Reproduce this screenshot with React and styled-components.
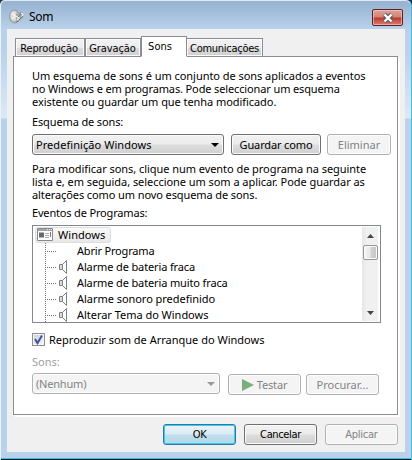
import React from "react";
import styled, { createGlobalStyle } from "styled-components";

const Global = createGlobalStyle`
  * { box-sizing: border-box; }
  body { margin: 0; background: #1c3550; }
`;

const Window = styled.div`
  width: 412px;
  height: 460px;
  display: flex;
  flex-direction: column;
  padding: 1px 6px 6px 6px;
  border: solid #eaf3fb;
  border-width: 0 1px 0 1px;
  border-right-color: #35c4e8;
  border-radius: 5px 6px 0 0;
  background: linear-gradient(#98b4d2 0, #98b4d2 3px, #b9d1ea 29px, #b9d1ea 50px, #dce9f7 118px, #b9d1ea 119px, #b9d1ea 100%);
  box-shadow: inset 0 1px #dfeaf5, inset 0 -1px #071018, inset 0 -2px #20cdf0;
  font: 11px/13px "Noto Sans", "Open Sans", sans-serif;
  color: #000;
  white-space: nowrap;
`;

const TitleBar = styled.header`
  height: 28px;
  flex: none;
  display: flex;
  align-items: flex-start;
  padding-left: 2px;
`;

const Title = styled.h1`
  margin: 9px 0 0 4px;
  flex: 1;
  font: 12px/14px "Noto Sans", sans-serif;
  letter-spacing: -0.3px;
`;

const Close = styled.button`
  width: 31px;
  height: 17px;
  margin: 8px 2px 0 0;
  padding: 0;
  display: flex;
  align-items: center;
  justify-content: center;
  border: 1px solid #5a2028;
  border-radius: 2px;
  background: linear-gradient(#e0a196 0, #d08478 7px, #b83a2b 8px, #c7584a 11px, #d98070 100%);
  box-shadow: inset 0 0 0 1px rgba(255, 214, 205, 0.55);
`;

const Client = styled.main`
  width: 398px;
  height: 423px;
  padding: 7px 7px 0 6px;
  background: #f0f0f0;
`;

const Tabs = styled.nav`
  height: 21px;
  display: flex;
  align-items: flex-end;
  padding-left: 2px;
`;

const Tab = styled.div`
  width: ${(p) => p.$w}px;
  height: ${(p) => (p.$active ? 21 : 19)}px;
  padding: 3px ${(p) => p.$right || 0}px 0 0;
  border: 1px solid #8c8c96;
  border-bottom-color: ${(p) => (p.$active ? "#fff" : "#8c8c96")};
  border-left-width: ${(p) => (p.$joined ? 0 : 1)}px;
  background: ${(p) => (p.$active ? "#fff" : "linear-gradient(#f3f3f3 0, #ebebeb 50%, #dcdcdc 51%, #d0d0d0 100%)")};
  box-shadow: ${(p) => (p.$active ? "none" : "inset 0 0 0 1px #fafafa")};
  font: 11px/14px "DejaVu Sans Condensed", "DejaVu Sans", sans-serif;
  font-stretch: condensed;
  text-align: center;
  letter-spacing: ${(p) => p.$ls || 0}px;
  position: relative;
  z-index: 1;
`;

const Panel = styled.section`
  width: 385px;
  height: 359px;
  margin-top: -1px;
  padding: 12px 0 0 18px;
  display: flex;
  flex-direction: column;
  border: 1px solid #8c8c96;
  background: #fff;
  box-shadow: 2px 2px #fff;
`;

const Line = styled.span`
  display: block;
  height: 13px;
  letter-spacing: ${(p) => p.$ls || 0}px;
  color: ${(p) => p.$color || "inherit"};
`;

const Paragraph = styled.div`
  height: 39px;
  flex: none;
  margin-bottom: ${(p) => p.$gap}px;
`;

const Label = styled(Line)`
  flex: none;
  margin-bottom: ${(p) => p.$gap}px;
`;

const Controls = styled.div`
  display: flex;
  flex: none;
  height: 22px;
  margin-bottom: 6px;
`;

const control = (p) =>
  p.$disabled
    ? "border: 1px solid #adb2b5; background: #f4f4f4; color: #838383; box-shadow: inset 0 0 0 1px #fcfcfc;"
    : p.$primary
    ? "border: 1px solid #2c7a9e; background: linear-gradient(#eaf3f8 0, #dcebf4 48%, #c2deec 52%, #b5d7e8 100%); box-shadow: inset 0 0 0 1px #35cdf5;"
    : "border: 1px solid #707070; background: linear-gradient(#f2f2f2 0, #ebebeb 48%, #dddddd 52%, #cfcfcf 100%); box-shadow: inset 0 0 0 1px #fbfbfb;";

const Button = styled.button`
  width: ${(p) => p.$w}px;
  height: 21px;
  flex: none;
  margin: ${(p) => p.$top || 0}px 0 0 ${(p) => p.$left || 0}px;
  padding: 0;
  display: flex;
  align-items: center;
  justify-content: center;
  gap: 3px;
  border-radius: 3px;
  color: #000;
  font: ${(p) => (p.$ui ? '11px/14px "DejaVu Sans Condensed"' : '11px/14px "Noto Sans"')}, sans-serif;
  font-stretch: ${(p) => (p.$ui ? "condensed" : "normal")};
  letter-spacing: ${(p) => p.$ls || 0}px;
  ${control}
`;

const Select = styled.div`
  width: ${(p) => p.$w}px;
  height: 21px;
  flex: none;
  display: flex;
  align-items: center;
  justify-content: space-between;
  padding: 0 4px 0 3px;
  border-radius: 3px;
  letter-spacing: ${(p) => p.$ls || 0}px;
  ${control}
`;

const List = styled.div`
  width: 349px;
  height: 98px;
  flex: none;
  display: flex;
  justify-content: space-between;
  padding: 1px 2px 1px 1px;
  margin-bottom: 10px;
  border: 1px solid #828790;
`;

const Tree = styled.ul`
  margin: 0;
  padding: 0 0 0 1px;
  list-style: none;
`;

const Root = styled.li`
  width: 76px;
  height: 16px;
  display: flex;
  align-items: center;
  gap: 5px;
  padding: 0 0 1px 1px;
  border: 1px solid #dedede;
  border-radius: 3px;
  background: linear-gradient(#fafafa, #e8e8e8);
  letter-spacing: ${(p) => p.$ls || 0}px;
`;

const Item = styled.li`
  height: 16px;
  display: flex;
  align-items: flex-start;
  line-height: 15px;
  letter-spacing: ${(p) => p.$ls || 0}px;
`;

const Scroll = styled.div`
  width: 16px;
  height: 94px;
  display: flex;
  flex-direction: column;
  align-items: center;
  background: linear-gradient(90deg, #e6e6e6, #f0f0f0 30%, #f0f0f0);
  padding: 7px 0 6px;
`;

const Thumb = styled.div`
  width: 15px;
  height: 15px;
  margin: 7px 0 auto;
  border: 1px solid #979797;
  border-radius: 2px;
  background: linear-gradient(90deg, #f5f5f5 0, #e9e9eb 45%, #d0d0d4 55%, #c5c5ca 100%);
  box-shadow: inset 0 0 0 1px #fafafa;
`;

const CheckRow = styled.label`
  height: 13px;
  flex: none;
  display: flex;
  align-items: center;
  gap: 4px;
  margin-bottom: 9px;
`;

const Check = styled.span`
  width: 13px;
  height: 13px;
  display: flex;
  border: 1px solid #8e8f8f;
  background: linear-gradient(135deg, #cbd0d8, #f6f6f6);
  box-shadow: inset 0 0 0 1px #f4f4f4;
`;

const Footer = styled.footer`
  display: flex;
  padding: 9px 0 0 150px;
`;

const SpeakerLogo = () => (
  <svg width="16" height="24" viewBox="0 -8 16 24">
    <ellipse cx="5.5" cy="7.5" rx="5" ry="6.5" fill="#b4b6b6" stroke="#8f9496" strokeWidth=".8" />
    <ellipse cx="5" cy="7" rx="3.6" ry="5" fill="#dcdddc" />
    <path d="M7 4 11 6 13 3 15 4 14 9 9 13 7 11Z" fill="#a3a7a8" />
    <path d="m3 4 3 3-3 3M7 7l3 2-2 2M12 4l2 1-1 3" fill="none" stroke="#f5f5f2" strokeWidth="1.2" />
    <path d="m9 8 3-3M10 11l4-4M7 13l3-1M11 5l1-2" stroke="#6e777c" strokeWidth=".9" />
  </svg>
);

const Arrow = ({ color = "#000", up, w = 8 }) => (
  <svg width={w} height="4" viewBox="0 0 8 4" preserveAspectRatio="none">
    <path d={up ? "M0 4h8L4 0Z" : "M0 0h8L4 4Z"} fill={color} />
  </svg>
);

const Branch = ({ icon }) => (
  <svg width="42" height="16" viewBox="0 0 42 16">
    <path d="M10.5 0v16M12 8.5h10" stroke="#777" strokeDasharray="1 1" />
    {icon && (
      <g fill="#fff" stroke="#808080">
        <path d="M27.5 5.5 31.5 1.5v13L27.5 10.5Z" />
        <path d="M24.5 5.5h3v5h-3Z" fill="#ddd" />
      </g>
    )}
  </svg>
);

const ProgramIcon = () => (
  <svg width="16" height="13" viewBox="0 0 16 13">
    <path d="M.5 .5h15v12H.5Z" fill="#fff" stroke="#8a8a8a" />
    <path d="M1 1h14v2H1Z" fill="#a5a5a5" />
    <path d="M10 1.5h1M12 1.5h1M14 1.5h1" stroke="#eee" />
    <path d="M2 4.5h5v5H2Z" fill="#626a70" />
    <path d="M8 5.5h4M8 7.5h4M8 9.5h4" stroke="#aaa" />
    <path d="M13.5 4v5" stroke="#777" />
  </svg>
);

const events = [
  ["Abrir Programa", false, -0.18],
  ["Alarme de bateria fraca", true, -0.13],
  ["Alarme de bateria muito fraca", true, -0.13],
  ["Alarme sonoro predefinido", true, -0.04],
  ["Alterar Tema do Windows", true, -0.03],
];

export default function App() {
  return (
    <Window>
      <Global />
      <TitleBar>
        <SpeakerLogo />
        <Title>Som</Title>
        <Close aria-label="Fechar">
          <svg width="12" height="10" viewBox="0 0 12 10">
            <path d="m2.5 1.5 7 7M9.5 1.5l-7 7" stroke="#555766" strokeWidth="4.4" />
            <path d="m2.5 1.5 7 7M9.5 1.5l-7 7" stroke="#fff" strokeWidth="2.4" />
          </svg>
        </Close>
      </TitleBar>
      <Client>
        <Tabs>
          <Tab $w={70} $ls={-0.1} $right={2}>Reprodução</Tab>
          <Tab $w={56} $ls={-0.1} $right={1}>Gravação</Tab>
          <Tab $w={46} $active $right={8}>Sons</Tab>
          <Tab $w={76} $joined $ls={-0.28}>Comunicações</Tab>
        </Tabs>
        <Panel>
          <Paragraph $gap={7}>
            <Line $ls={-0.04}>Um esquema de sons é um conjunto de sons aplicados a eventos</Line>
            <Line $ls={-0.13}>no Windows e em programas. Pode seleccionar um esquema</Line>
            <Line $ls={-0.06}>existente ou guardar um que tenha modificado.</Line>
          </Paragraph>
          <Label $gap={6} $ls={-0.13}>Esquema de sons:</Label>
          <Controls>
            <Select $w={192} $ls={0.06}>Predefinição Windows<Arrow /></Select>
            <Button $w={90} $left={7} $ls={-0.14}>Guardar como</Button>
            <Button $w={64} $left={6} $disabled>Eliminar</Button>
          </Controls>
          <Paragraph $gap={5}>
            <Line $ls={-0.05}>Para modificar sons, clique num evento de programa na seguinte</Line>
            <Line $ls={-0.05}>lista e, em seguida, seleccione um som a aplicar. Pode guardar as</Line>
            <Line $ls={-0.1}>alterações como um novo esquema de sons.</Line>
          </Paragraph>
          <Label $gap={6} $ls={-0.17}>Eventos de Programas:</Label>
          <List>
            <Tree>
              <Root $ls={0.05}><ProgramIcon />Windows</Root>
              {events.map(([name, icon, ls]) => (
                <Item key={name} $ls={ls}><Branch icon={icon} />{name}</Item>
              ))}
            </Tree>
            <Scroll>
              <Arrow up color="#444" w={7} />
              <Thumb />
              <Arrow color="#444" w={7} />
            </Scroll>
          </List>
          <CheckRow>
            <Check>
              <svg width="11" height="11" viewBox="0 0 11 11">
                <path d="m2 5 2.5 4L9 1.5" fill="none" stroke="#40539b" strokeWidth="2" />
              </svg>
            </Check>
            <Line>Reproduzir som de Arranque do Windows</Line>
          </CheckRow>
          <Label $gap={5} $color="#a0a0a0">Sons:</Label>
          <Controls>
            <Select $w={188} $disabled $ls={-0.2}>(Nenhum)<Arrow color="#999" /></Select>
            <Button $w={73} $left={8} $top={1} $disabled $ls={-0.15}>
              <svg width="12" height="12" viewBox="0 0 12 12"><path d="M0 0 12 6 0 12Z" fill="#79ae7d" /></svg>
              Testar
            </Button>
            <Button $w={73} $left={5} $top={1} $disabled>Procurar...</Button>
          </Controls>
        </Panel>
        <Footer>
          <Button $ui $w={73} $primary $ls={-0.4}>OK</Button>
          <Button $ui $w={73} $left={8} $ls={-0.35}>Cancelar</Button>
          <Button $ui $w={73} $left={8} $disabled $ls={-0.25}>Aplicar</Button>
        </Footer>
      </Client>
    </Window>
  );
}
